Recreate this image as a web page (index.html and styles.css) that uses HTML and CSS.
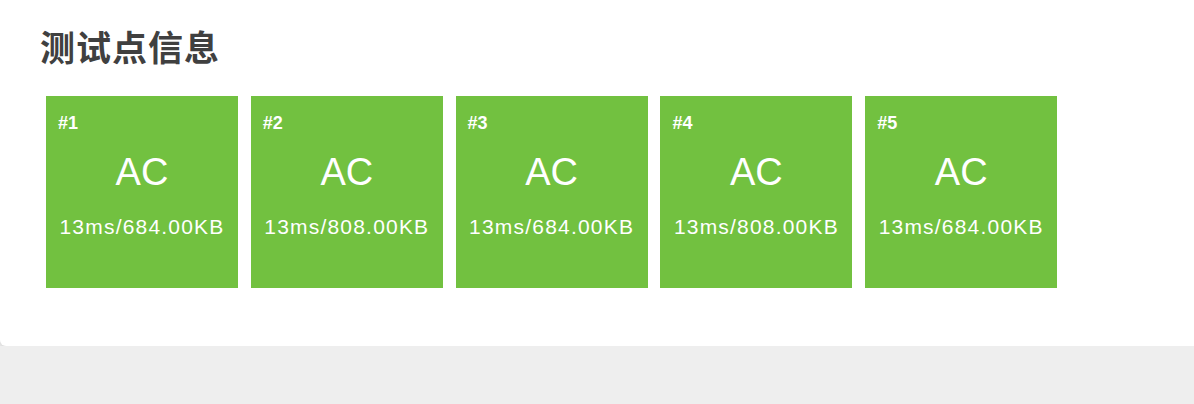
FILE: index.html
```html
<!DOCTYPE html>
<html lang="zh-CN">
<head>
<meta charset="utf-8">
<title>测试点信息</title>
<link rel="stylesheet" href="styles.css">
</head>
<body>
<section class="panel">
  <h2 class="panel-title">测试点信息</h2>
  <div class="cases">
    <div class="case">
      <div class="case-id">#1</div>
      <div class="case-status">AC</div>
      <div class="case-stat">13ms/684.00KB</div>
    </div>
    <div class="case">
      <div class="case-id">#2</div>
      <div class="case-status">AC</div>
      <div class="case-stat">13ms/808.00KB</div>
    </div>
    <div class="case">
      <div class="case-id">#3</div>
      <div class="case-status">AC</div>
      <div class="case-stat">13ms/684.00KB</div>
    </div>
    <div class="case">
      <div class="case-id">#4</div>
      <div class="case-status">AC</div>
      <div class="case-stat">13ms/808.00KB</div>
    </div>
    <div class="case">
      <div class="case-id">#5</div>
      <div class="case-status">AC</div>
      <div class="case-stat">13ms/684.00KB</div>
    </div>
  </div>
</section>
</body>
</html>
```

FILE: styles.css
```css
html {
  background: #eeeeee;
}

body {
  margin: 0;
  font-family: "Liberation Sans", "Noto Sans CJK SC", sans-serif;
  overflow: hidden;
}

.panel {
  background: #ffffff;
  margin: -10px -10px 0 0;
  padding: 39px 0 58px 40px;
  border-radius: 0 0 6px 6px;
  box-shadow: 0 2px 6px rgba(0, 0, 0, 0.12);
}

.panel-title {
  margin: 0;
  font-size: 35px;
  line-height: 40px;
  font-weight: bold;
  color: #404040;
  letter-spacing: 1px;
}

.cases {
  display: flex;
  gap: 12.8px;
  padding-left: 6px;
  margin-top: 27px;
}

.case {
  width: 192px;
  height: 192px;
  box-sizing: border-box;
  padding: 0 12px;
  background: #72c140;
  color: #ffffff;
  display: flex;
  flex-direction: column;
}

.case-id {
  margin-top: 17px;
  font-size: 18px;
  line-height: 20px;
  font-weight: bold;
}

.case-status {
  margin-top: 17px;
  text-align: center;
  font-size: 38px;
  line-height: 44px;
}

.case-stat {
  margin-top: 21px;
  text-align: center;
  font-size: 21px;
  line-height: 24px;
  letter-spacing: 1.2px;
  white-space: nowrap;
}
```
